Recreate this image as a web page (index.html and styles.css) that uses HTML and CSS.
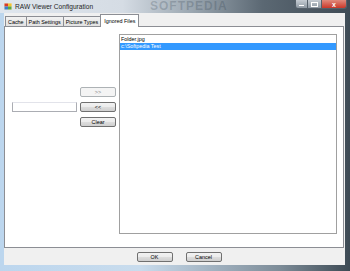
FILE: index.html
```html
<!DOCTYPE html>
<html lang="en">
<head>
    <meta charset="UTF-8">
    <title>RAW Viewer Configuration</title>
    <link rel="stylesheet" href="styles.css">
</head>
<body>
    <div class="window">
        <div class="titlebar">
            <svg class="app-icon" width="8" height="7" viewBox="0 0 8 7">
                <rect x="0" y="0" width="8" height="7" fill="#e9e2c8"/>
                <rect x="0.5" y="0.5" width="3.5" height="3" fill="#d83a2a"/>
                <rect x="4" y="0.5" width="3.5" height="3" fill="#f2c230"/>
                <rect x="0.5" y="3.5" width="3.5" height="3" fill="#3a7fd0"/>
                <rect x="4" y="3.5" width="3.5" height="3" fill="#5aa845"/>
            </svg>
            <span class="title">RAW Viewer Configuration</span>
            <span class="watermark">SOFTPEDIA</span>
            <div class="controls">
                <div class="ctl ctl-min"><span></span></div>
                <div class="ctl ctl-max"><span></span></div>
                <div class="ctl ctl-close">x</div>
            </div>
        </div>

        <div class="client">
            <div class="tabs">
                <div class="tab">Cache</div>
                <div class="tab">Path Settings</div>
                <div class="tab">Picture Types</div>
                <div class="tab active">Ignored Files</div>
            </div>

            <div class="page">
                <div class="left">
                    <input class="textbox" type="text">
                    <div class="buttons">
                        <button class="btn" disabled>&gt;&gt;</button>
                        <button class="btn">&lt;&lt;</button>
                        <button class="btn">Clear</button>
                    </div>
                </div>
                <div class="listbox">
                    <div class="item">Folder.jpg</div>
                    <div class="item selected">c:\Softpedia Test</div>
                </div>
            </div>

            <div class="footer">
                <button class="btn wide">OK</button>
                <button class="btn wide">Cancel</button>
            </div>
        </div>
    </div>
</body>
</html>
```

FILE: styles.css
```css
body {
    margin: 0;
    padding: 0;
    font-family: "Liberation Sans", Arial, sans-serif;
    background: #4a5660;
}

.window {
    width: 350px;
    height: 271px;
    display: flex;
    flex-direction: column;
    box-sizing: border-box;
    background: linear-gradient(90deg, #bcd6ee 0px, #c9dced 40%, #7d8c98 80%, #3d4a54 100%);
    padding: 0 5px 6px 4px;
    overflow: hidden;
}

.titlebar {
    height: 13px;
    margin: 0 -5px 0 -4px;
    padding-left: 4px;
    display: flex;
    align-items: center;
    position: relative;
    background: linear-gradient(90deg, #dfe6ee 0%, #d5dce4 35%, #9aa6b0 55%, #5b6873 75%, #3f4b55 100%);
}

.app-icon {
    margin-right: 3px;
}

.title {
    font-size: 6.6px;
    color: #1e1e1e;
}

.watermark {
    position: absolute;
    left: 150px;
    top: 0;
    line-height: 13px;
    font-size: 12px;
    font-weight: bold;
    letter-spacing: 1px;
    color: rgba(40, 55, 70, 0.22);
}

.controls {
    margin-left: auto;
    margin-right: 3px;
    align-self: flex-start;
    display: flex;
    position: relative;
}

.ctl {
    height: 9px;
    box-sizing: border-box;
    border: 1px solid #55606a;
    border-top: none;
    display: flex;
    align-items: center;
    justify-content: center;
    background: linear-gradient(#c5ccd3, #8e99a3);
}

.ctl-min {
    width: 13px;
    border-radius: 0 0 0 3px;
}

.ctl-min span {
    width: 5px;
    height: 1px;
    background: #fff;
    margin-top: 2px;
}

.ctl-max {
    width: 14px;
    border-left: none;
}

.ctl-max span {
    width: 5px;
    height: 3px;
    border: 1px solid #fff;
}

.ctl-close {
    width: 25px;
    border-left: none;
    border-radius: 0 0 3px 0;
    background: linear-gradient(#e08a7c, #c9382a);
    color: #fff;
    font-size: 7px;
    font-weight: bold;
}

.client {
    flex: 1;
    display: flex;
    flex-direction: column;
    background: #f0f0f0;
    font-size: 5.4px;
    color: #000;
}

.tabs {
    height: 13px;
    display: flex;
    align-items: flex-end;
    padding-left: 1px;
}

.tab {
    height: 10px;
    box-sizing: border-box;
    padding: 0 2px;
    border: 1px solid #8c8e94;
    border-bottom: none;
    margin-right: -1px;
    display: flex;
    align-items: center;
    background: linear-gradient(#f2f2f2, #e1e1e1);
    white-space: nowrap;
}

.tab.active {
    height: 13px;
    margin-bottom: -1px;
    padding: 0 3px;
    background: #fff;
    position: relative;
    z-index: 1;
}

.page {
    height: 222px;
    box-sizing: border-box;
    margin-right: 1px;
    border: 1px solid #8c8e94;
    background: #fff;
    display: flex;
    align-items: flex-start;
    padding: 7px 5px 0 7px;
}

.left {
    display: flex;
    align-items: flex-start;
    margin-top: 53px;
}

.textbox {
    width: 65px;
    height: 10px;
    box-sizing: border-box;
    margin: 15px 3px 0 0;
    padding: 0;
    border: 1px solid #abadb3;
    border-top-color: #e2e3ea;
    font-size: 5px;
    outline: none;
}

.buttons {
    display: flex;
    flex-direction: column;
    gap: 5px;
    margin-right: 3px;
}

.btn {
    width: 36px;
    height: 10px;
    box-sizing: border-box;
    padding: 0;
    border: 1px solid #707070;
    border-radius: 2px;
    background: linear-gradient(#f2f2f2 0%, #ebebeb 50%, #dddddd 51%, #cfcfcf 100%);
    font-family: "Liberation Sans", Arial, sans-serif;
    font-size: 5.4px;
    color: #000;
}

.btn:disabled {
    border-color: #adb2b5;
    background: #f4f4f4;
    color: #838383;
}

.listbox {
    width: 218px;
    height: 200px;
    box-sizing: border-box;
    border: 1px solid #a0a0a0;
    padding-top: 1px;
}

.item {
    height: 7px;
    line-height: 7px;
    padding-left: 1px;
}

.item.selected {
    background: #3399ff;
    color: #fff;
}

.footer {
    flex: 1;
    display: flex;
    justify-content: center;
    align-items: center;
    gap: 13px;
    padding-left: 9px;
}
```
